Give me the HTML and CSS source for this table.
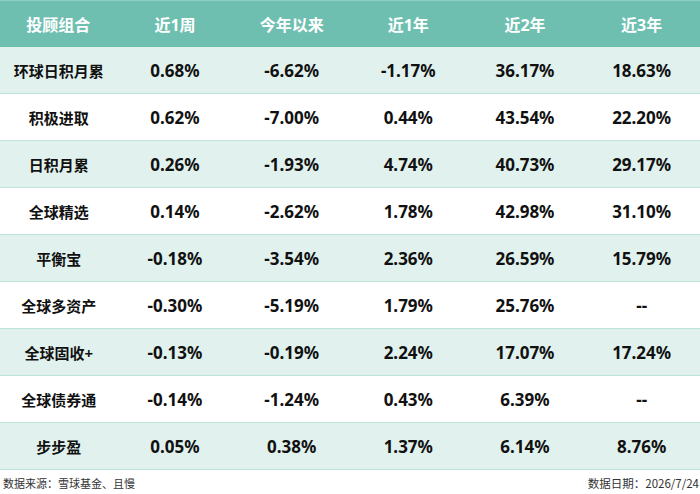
FILE: index.html
```html
<!DOCTYPE html>
<html lang="zh">
<head>
<meta charset="utf-8">
<link rel="stylesheet" href="styles.css">
</head>
<body>
<div class="page">
  <table class="perf">
    <thead>
      <tr><th>投顾组合</th><th>近1周</th><th>今年以来</th><th>近1年</th><th>近2年</th><th>近3年</th></tr>
    </thead>
    <tbody>
      <tr class="alt"><td class="name">环球日积月累</td><td>0.68%</td><td>-6.62%</td><td>-1.17%</td><td>36.17%</td><td>18.63%</td></tr>
      <tr><td class="name">积极进取</td><td>0.62%</td><td>-7.00%</td><td>0.44%</td><td>43.54%</td><td>22.20%</td></tr>
      <tr class="alt"><td class="name">日积月累</td><td>0.26%</td><td>-1.93%</td><td>4.74%</td><td>40.73%</td><td>29.17%</td></tr>
      <tr><td class="name">全球精选</td><td>0.14%</td><td>-2.62%</td><td>1.78%</td><td>42.98%</td><td>31.10%</td></tr>
      <tr class="alt"><td class="name">平衡宝</td><td>-0.18%</td><td>-3.54%</td><td>2.36%</td><td>26.59%</td><td>15.79%</td></tr>
      <tr><td class="name">全球多资产</td><td>-0.30%</td><td>-5.19%</td><td>1.79%</td><td>25.76%</td><td>--</td></tr>
      <tr class="alt"><td class="name">全球固收+</td><td>-0.13%</td><td>-0.19%</td><td>2.24%</td><td>17.07%</td><td>17.24%</td></tr>
      <tr><td class="name">全球债券通</td><td>-0.14%</td><td>-1.24%</td><td>0.43%</td><td>6.39%</td><td>--</td></tr>
      <tr class="alt"><td class="name">步步盈</td><td>0.05%</td><td>0.38%</td><td>1.37%</td><td>6.14%</td><td>8.76%</td></tr>
    </tbody>
  </table>
  <div class="footer">
    <span>数据来源：雪球基金、且慢</span>
    <span>数据日期：2026/7/24</span>
  </div>
</div>
</body>
</html>
```

FILE: styles.css
```css
html, body {
  margin: 0;
  padding: 0;
  background: #ffffff;
}
.page {
  width: 700px;
  height: 494px;
  font-family: "Noto Sans", "Noto Sans CJK SC", sans-serif;
}
.perf {
  width: 700px;
  border-collapse: collapse;
  table-layout: fixed;
}
.perf th {
  background: #6fbfb1;
  color: #ffffff;
  font-size: 16px;
  font-weight: 700;
  height: 46px;
  padding: 0;
  border-top: 1px solid #8ccfc3;
  text-align: center;
}
.perf td {
  height: 46px;
  padding: 0 0 0 0;
  text-align: center;
  font-size: 17px;
  font-weight: 700;
  color: #111111;
  border-bottom: 1px solid #bde3db;
}
.perf td.name {
  font-size: 15px;
  padding-left: 1px;
}
.perf tr.alt td {
  background: #e1f2ee;
}
.footer {
  display: flex;
  justify-content: space-between;
  padding: 5px 1px 0 3px;
  font-size: 11px;
  color: #333333;
  font-family: "Noto Sans CJK SC", sans-serif;
}
.footer span:last-child {
  font-size: 11.5px;
}
```
